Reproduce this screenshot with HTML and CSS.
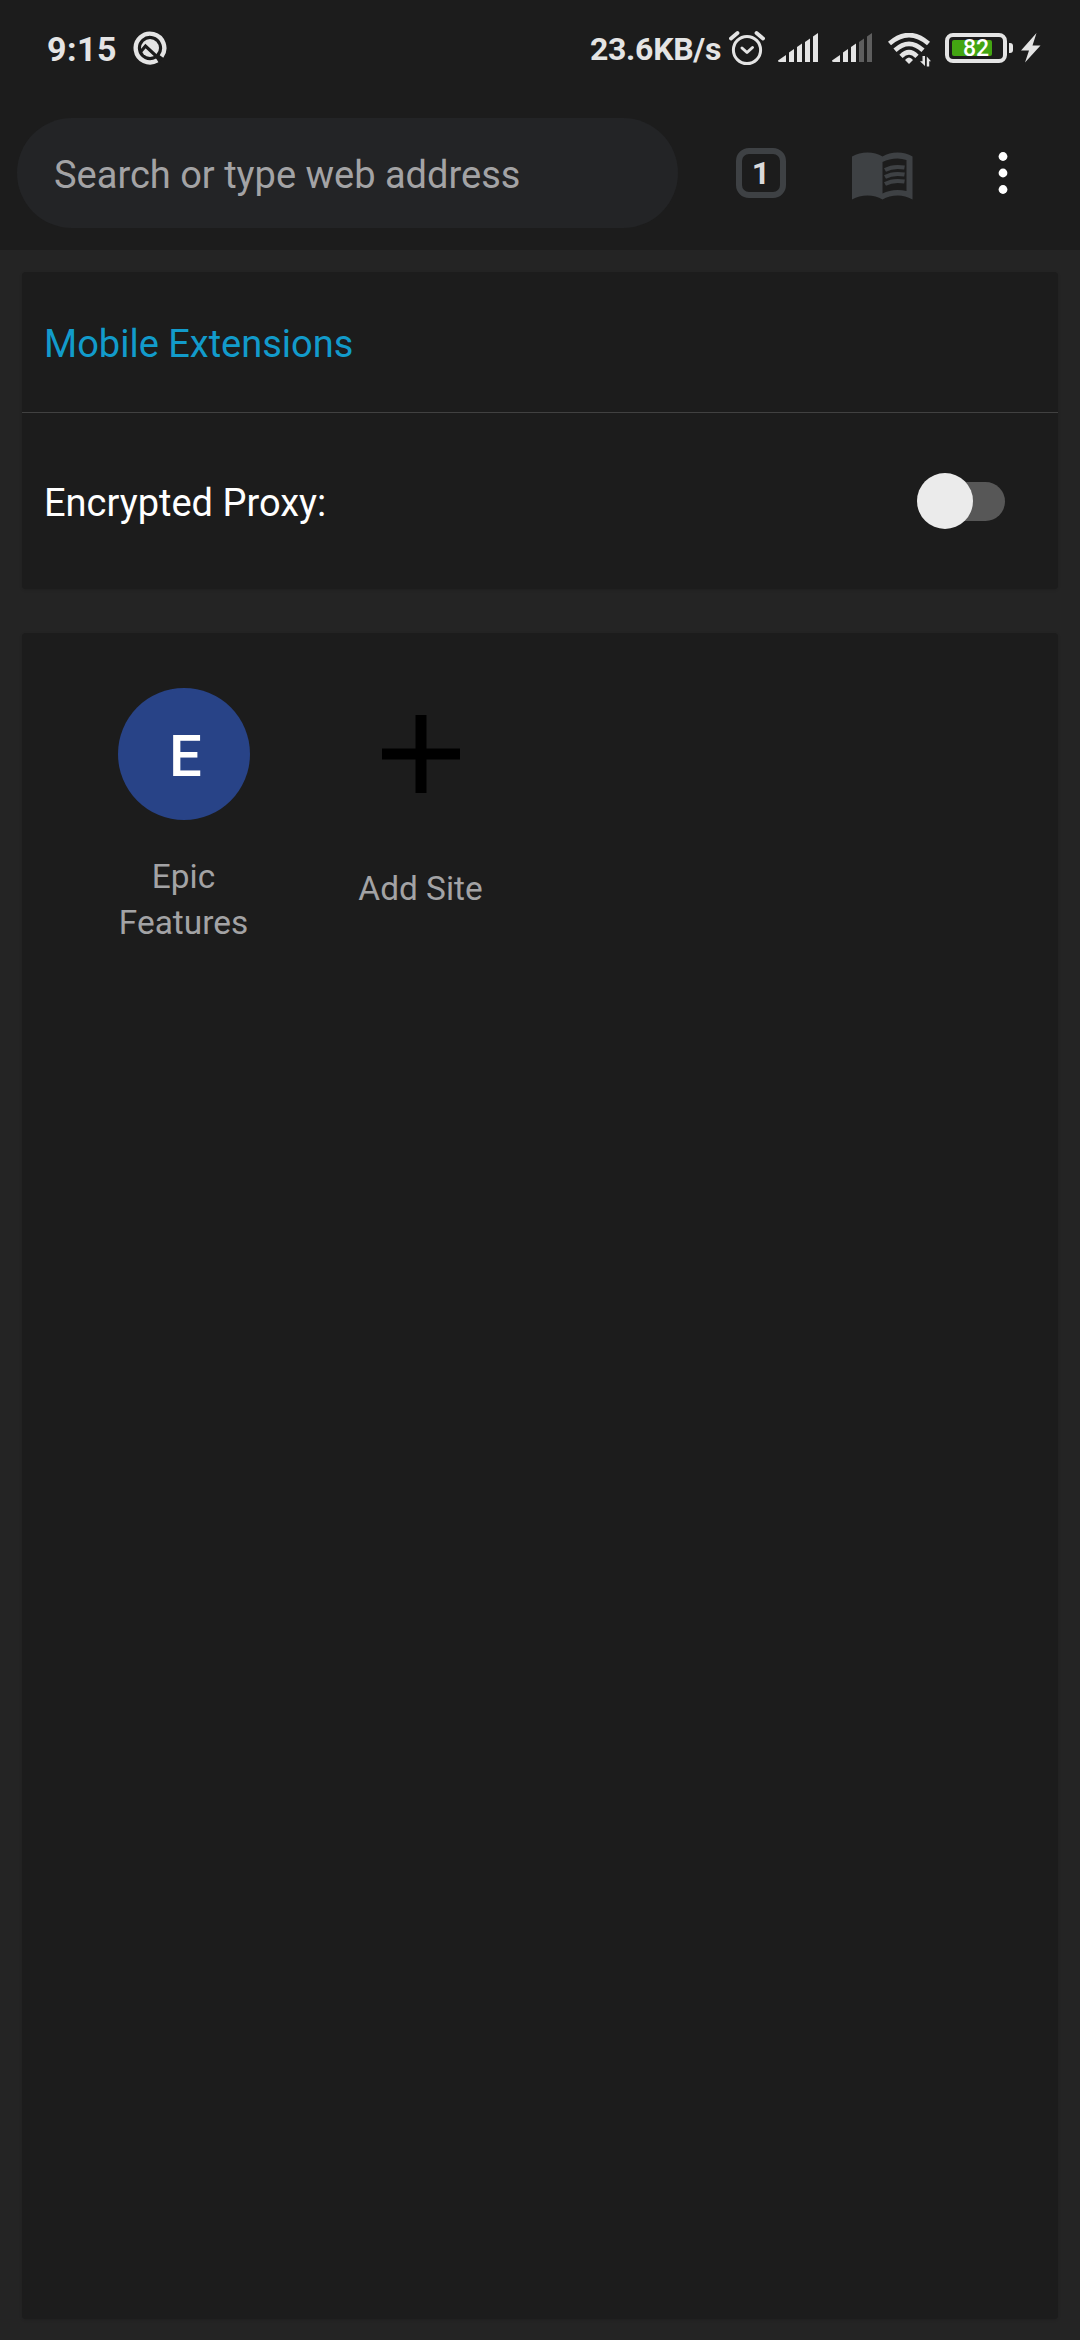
FILE: index.html
```
<!DOCTYPE html>
<html lang="en">

<head>
    <meta charset="utf-8">
    <title>New tab</title>
    <link rel="stylesheet" href="styles.css">
</head>

<body>
    <div class="status-bar">
        <span class="time">9:15</span>
        <svg class="icon-q" width="34" height="34" viewBox="0 0 34 34">
            <path d="M24.3 29.3A14.3 14.3 0 1 1 28.5 25.5" fill="none" stroke="#e4e4e4" stroke-width="4.4" />
            <circle cx="17" cy="17" r="9" fill="#e4e4e4" />
            <path d="M7 21.5L12.5 15L28 29.5" fill="none" stroke="#1c1c1c" stroke-width="3.2" />
        </svg>
        <span class="speed">23.6KB/s</span>
        <svg class="icon-alarm" width="36" height="36" viewBox="0 0 36 36" fill="none" stroke="#e4e4e4"
            stroke-linecap="round" stroke-linejoin="round">
            <circle cx="18" cy="20" r="13.6" stroke-width="3" />
            <path d="M13 18L18 22.5L23.5 17.5" stroke-width="3" />
            <path d="M2 8.5L8.5 3M27.5 3L34 8.5" stroke-width="3.8" />
        </svg>
        <svg class="icon-signal" width="41" height="30" viewBox="0 0 41 30" fill="#e4e4e4">
            <path d="M0 27.5L8 22V29H1.5Q0 29 0 27.5Z" />
            <path d="M11 19.5L16 16V29H11Z" />
            <path d="M19 14L24 10.5V29H19Z" />
            <path d="M27 9L32 5.5V29H27Z" />
            <path d="M35 3.5L40 0V29H35Z" />
        </svg>
        <svg class="icon-signal2" width="41" height="30" viewBox="0 0 41 30" fill="#e4e4e4">
            <path d="M0 27.5L8 22V29H1.5Q0 29 0 27.5Z" />
            <path d="M11 19.5L16 16V29H11Z" />
            <path d="M19 14L24 10.5V29H19Z" />
            <path d="M27 9L32 5.5V29H27Z" fill="#5e5e5e" />
            <path d="M35 3.5L40 0V29H35Z" fill="#5e5e5e" />
        </svg>
        <svg class="icon-wifi" width="43" height="34" viewBox="0 0 43 34">
            <g fill="none" stroke="#e4e4e4" stroke-width="4.6">
                <path d="M1.5 10.5Q21 -6.3 40.5 10.5" />
                <path d="M7 17.3Q21 4.5 35 17.3" />
                <path d="M13 23.3Q21 15.3 29 23.3" />
            </g>
            <path d="M17 27Q21 22 25 27L21 31Z" fill="#e4e4e4" />
            <path d="M34.5 23H37V33L32 28.2H34.5ZM38.8 33.5V23.5L43 28.2H41.2V33.5Z" fill="#e4e4e4" />
        </svg>
        <div class="battery">
            <div class="battery-level">82</div>
        </div>
        <div class="battery-tip"></div>
        <svg class="icon-bolt" width="20" height="30" viewBox="0 0 20 30">
            <path d="M15.5 0L0 17.5H8L4 29.5L19.5 12.5H11.5Z" fill="#e4e4e4" />
        </svg>
    </div>

    <header class="toolbar">
        <div class="search">Search or type web address</div>
        <div class="tab-count">1</div>
        <svg class="icon-book" width="62" height="48" viewBox="0 0 62 48">
            <path fill="#3e4144" fill-rule="evenodd"
                d="M0 4.5Q7 .5 15.5 .5Q24 .5 30.5 4.5Q37 .5 45.5 .5Q54 .5 60.5 4.5V47.5Q53 43.5 46 43.5Q37 43.5 30.5 47.5Q24 43.5 15.5 43.5Q7 43.5 0 47.5ZM30.5 10V41.5Q37 38 45.5 38Q50 38 54.5 39V8Q50 6.5 45.5 6.5Q37 6.5 30.5 10Z" />
            <g fill="none" stroke="#3e4144" stroke-width="4">
                <path d="M33 18Q41 13.5 52.5 15.5" />
                <path d="M33 25Q41 20.5 52.5 22.5" />
                <path d="M33 32Q41 27.5 52.5 29.5" />
            </g>
        </svg>
        <svg class="icon-menu" width="10" height="44" viewBox="0 0 10 44" fill="#fff">
            <circle cx="5" cy="5.5" r="4.4" />
            <circle cx="5" cy="22" r="4.4" />
            <circle cx="5" cy="38.5" r="4.4" />
        </svg>
    </header>

    <main class="content">
        <section class="card">
            <div class="row row-title">Mobile Extensions</div>
            <div class="row row-proxy">
                <span>Encrypted Proxy:</span>
                <div class="switch">
                    <div class="switch-thumb"></div>
                </div>
            </div>
        </section>

        <section class="card sites">
            <div class="site">
                <div class="site-icon letter">E</div>
                <div class="site-name">Epic Features</div>
            </div>
            <div class="site">
                <div class="site-icon">
                    <svg width="78" height="78" viewBox="0 0 78 78">
                        <path d="M33.5 0H44.5V33.5H78V44.5H44.5V78H33.5V44.5H0V33.5H33.5Z" fill="#000" />
                    </svg>
                </div>
                <div class="site-name add">Add Site</div>
            </div>
        </section>
    </main>
</body>

</html>
```
FILE: styles.css
```
* {
    box-sizing: border-box;
}

body {
    margin: 0;
    width: 1080px;
    height: 2340px;
    display: flex;
    flex-direction: column;
    background-color: #242424;
    font-family: Roboto, sans-serif;
    font-size: 38px;
    overflow: hidden;
}

svg {
    display: block;
    flex: none;
}

.status-bar {
    height: 96px;
    flex: none;
    display: flex;
    align-items: center;
    background-color: #1c1c1c;
    color: #e4e4e4;
    font-weight: 700;
    white-space: nowrap;
}

.time {
    width: 86px;
    margin-left: 47px;
    padding-top: 1px;
    font-size: 34px;
    letter-spacing: .5px;
}

.speed {
    width: 139px;
    margin-left: 423px;
    padding-top: 2px;
    font-size: 32px;
    letter-spacing: -.3px;
}

.icon-signal {
    margin-left: 13px;
}

.icon-signal2 {
    margin-left: 13px;
}

.icon-wifi {
    margin-left: 15px;
    margin-top: 3px;
}

.battery {
    width: 62px;
    height: 30px;
    margin-left: 14px;
    padding: 3px;
    border: 4px solid #e4e4e4;
    border-radius: 8px;
}

.battery-level {
    width: 40px;
    height: 16px;
    padding-left: 11px;
    border-radius: 2px;
    background-color: #43a512;
    color: #fff;
    font-size: 23px;
    font-weight: 500;
    line-height: 18px;
}

.battery-tip {
    width: 4px;
    height: 10px;
    margin-left: 2px;
    border-radius: 0 3px 3px 0;
    background-color: #e4e4e4;
}

.icon-bolt {
    margin-left: 8px;
}

.toolbar {
    height: 154px;
    flex: none;
    display: flex;
    align-items: center;
    background-color: #1c1c1c;
}

.search {
    width: 661px;
    height: 110px;
    margin-left: 17px;
    padding-left: 37px;
    border-radius: 55px;
    background-color: #232426;
    color: #a3a3a5;
    line-height: 114px;
}

.tab-count {
    width: 50px;
    height: 50px;
    margin-left: 58px;
    border: 6px solid #3e4144;
    border-radius: 13px;
    color: #dadada;
    font-size: 32px;
    font-weight: 700;
    line-height: 39px;
    text-align: center;
}

.icon-book {
    margin-left: 66px;
    margin-top: 5px;
}

.icon-menu {
    margin-left: 84px;
}

.content {
    flex: 1;
    display: flex;
    flex-direction: column;
    gap: 44px;
    padding: 22px 22px 21px;
}

.card {
    border-radius: 4px;
    background-color: #1c1c1c;
    box-shadow: 0 1px 3px rgba(0, 0, 0, .15);
}

.row {
    display: flex;
    align-items: center;
    padding-left: 22px;
}

.row-title {
    height: 141px;
    padding-top: 3px;
    border-bottom: 1px solid #414141;
    color: #129bcb;
}

.row-proxy {
    height: 176px;
    justify-content: space-between;
    padding-right: 53px;
    color: #fff;
}

.row-proxy span {
    padding-top: 3px;
}

.switch {
    width: 80px;
    height: 39px;
    display: flex;
    align-items: center;
    border-radius: 20px;
    background-color: #575757;
}

.switch-thumb {
    width: 56px;
    height: 56px;
    margin-left: -8px;
    flex: none;
    border-radius: 50%;
    background-color: #ebebeb;
}

.sites {
    flex: 1;
    display: flex;
    padding: 55px 43px;
}

.site {
    width: 237px;
    display: flex;
    flex-direction: column;
    align-items: center;
}

.site-icon {
    width: 132px;
    height: 132px;
    display: flex;
    align-items: center;
    justify-content: center;
    border-radius: 50%;
}

.letter {
    padding-left: 4px;
    padding-top: 4px;
    background-color: #284387;
    color: #fff;
    font-size: 58px;
    font-weight: 500;
}

.site-name {
    width: 140px;
    margin-top: 34px;
    color: #a3a3a5;
    font-size: 33.4px;
    line-height: 46px;
    text-align: center;
}

.add {
    margin-top: 46px;
}
```
